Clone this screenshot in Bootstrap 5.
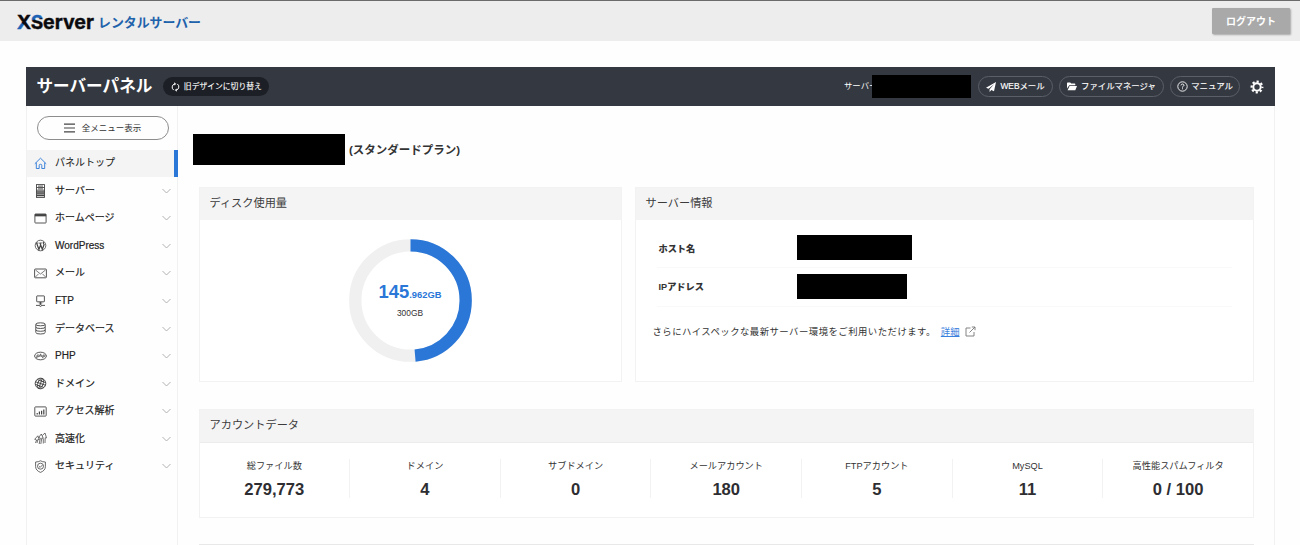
<!DOCTYPE html>
<html lang="ja">
<head>
<meta charset="utf-8">
<title>サーバーパネル</title>
<link href="https://cdn.jsdelivr.net/npm/bootstrap@5.3.0/dist/css/bootstrap.min.css" rel="stylesheet">
<style>
body{font-family:"Liberation Sans","Noto Sans CJK JP",sans-serif;color:#333;background:#fefefe;height:545px;overflow:hidden;line-height:1.5}
svg{display:block;flex:none}
.topbar{height:41px;background:#ededed;border-top:1px solid #6d6a6e;padding:0 10px 0 16px}
.logout{width:78px;height:26px;background:#a9a9a9;color:#fff;font-size:10px;font-weight:700;border:0;border-radius:1px;padding:0;box-shadow:1px 1px 2px rgba(0,0,0,.3)}
.logout:hover{background:#999;color:#fff}
.panelbox{margin:26px 25px 0 26px;height:478px}
.panelhead{height:39px;background:#343840;color:#fff;padding:0 11px 0 10.5px}
.panelhead h1{font-size:16.6px;font-weight:700;line-height:1;padding-top:2px}
.oldbtn{height:18.5px;width:106px;background:#1c1f25;font-size:7.8px;margin-left:11px;-webkit-text-stroke:.1px}
.tool{height:21px;border:1px solid #5b6068;font-size:8.4px;-webkit-text-stroke:.15px}
.srvname{font-size:8.4px;width:28px}
.hid{background:#000;flex:none}
.sidebar{width:152px;border:solid #f1f1f1;border-width:0 1px}
.allmenu{width:132px;height:24px;border:1px solid #8d8d8d;margin:10px 0 9.5px 9.5px;font-size:8.5px;color:#333}
.side-item{height:27.56px;padding:0 6px 0 7px;font-size:10px;color:#222;-webkit-text-stroke:.2px;text-decoration:none}
.side-item span{margin-left:8px;flex:1;margin-top:-1px}
.side-item.on{background:#f4f4f4;box-shadow:inset -4px 0 #2a77d8;width:151px;-webkit-text-stroke:.08px}
.ic{fill:none;stroke:#444;stroke-width:.9}
.chev{fill:none;stroke:#aaa;stroke-width:.9}
.mainarea{padding:28px 20px 0 15px;border-right:1px solid #f1f1f1;min-width:0}
.plan{font-size:11.5px;font-weight:700;margin:2px 0 0 4px}
.box{border:1px solid #f2f2f2;background:#fff}
.box-title{background:#f4f4f4;font-size:11.2px;padding:0 0 1px 10px;color:#3c3c3c}
.inforow{height:38.8px;border-bottom:1px solid #f9f9f9;font-size:9.2px;font-weight:700;padding-left:2px}
.inforow b{width:138.5px;padding-top:3px}
.note{font-size:9.35px;letter-spacing:.5px;margin:18px 0 0 17px}
.note a{color:#3a80dd;letter-spacing:0;margin-left:5px}
.stat{height:39px;font-size:9.2px;border-right:1px solid #f2f2f2;line-height:14px}
.stat:last-child{border:0}
.stat strong{font-size:16.6px;line-height:20px;margin-top:7px;color:#2e2e32}
.donut{width:123px;height:123px}
.donut-label{position:absolute;inset:0;color:#2a77d8;line-height:1}
</style>
</head>
<body>
<header class="topbar d-flex align-items-center justify-content-between">
  <svg width="190" height="26" viewBox="0 0 190 26">
    <defs>
      <linearGradient id="gx" gradientUnits="userSpaceOnUse" x1="1" y1="21" x2="15" y2="7"><stop offset=".36" stop-color="#1d62b5"/><stop offset=".42" stop-color="#0b0b0f"/></linearGradient>
      <linearGradient id="gs" gradientUnits="userSpaceOnUse" x1="18" y1="7" x2="21" y2="20"><stop offset=".3" stop-color="#1d62b5"/><stop offset=".4" stop-color="#0b0b0f"/></linearGradient>
    </defs>
    <g font-family="Inter,'Liberation Sans',sans-serif" font-weight="700" font-size="19" stroke-width=".35">
      <text x=".8" y="20.500" textLength="14.500" lengthAdjust="spacingAndGlyphs" fill="url(#gx)" stroke="url(#gx)">X</text>
      <text x="14.700" y="20.500" textLength="12.500" lengthAdjust="spacingAndGlyphs" fill="url(#gs)" stroke="url(#gs)">S</text>
      <text x="27" y="20.500" textLength="51" lengthAdjust="spacingAndGlyphs" fill="#0b0b0f" stroke="#0b0b0f">erver</text>
    </g>
    <text x="82" y="19" textLength="103" font-family="'Noto Sans CJK JP',sans-serif" font-weight="700" font-size="12.900" fill="#1d62ab">レンタルサーバー</text>
  </svg>
  <button class="btn logout">ログアウト</button>
</header>

<div class="panelbox d-flex flex-column">
  <div class="panelhead d-flex align-items-center flex-shrink-0">
    <h1 class="m-0">サーバーパネル</h1>
    <a class="oldbtn rounded-pill d-flex align-items-center justify-content-center gap-1 text-white text-decoration-none">
      <svg width="9" height="10" viewBox="0 0 9 10" fill="none" stroke="#fff" stroke-width="1"><path d="M2.800 8.100A3.400 3.400 0 0 1 3.400 2M6.200 1.900A3.400 3.400 0 0 1 5.600 8"/><path d="M3.200.2 5.200 1.900 3.200 3.600zM5.800 6.400 3.800 8.100 5.800 9.800z" fill="#fff" stroke="none"/></svg>旧デザインに切り替え</a>
    <div class="d-flex align-items-center ms-auto">
      <span class="text-nowrap srvname">サーバー</span>
      <span class="hid position-relative" style="width:99px;height:23px"></span>
      <a class="tool rounded-pill d-flex align-items-center justify-content-center gap-1 text-white text-decoration-none" style="width:75px;margin-left:7px">
        <svg width="10" height="10" viewBox="0 0 10 10" fill="#fff"><path d="M10 0 0 5.700l2.500 1L8 2.200 3.600 7.200V10l1.700-1.900 2.700 1.100z"/></svg>WEBメール</a>
      <a class="tool rounded-pill d-flex align-items-center justify-content-center gap-1 text-white text-decoration-none" style="width:105px;margin-left:6px">
        <svg width="10" height="9" viewBox="0 0 10 9" fill="#fff"><path d="M0 6.500V1.200Q0 .6.600.6h2.600l1 1h3.500q.6 0 .6.600v1H2.200z"/><path d="M2.600 4H10L8.300 8.200H.6z"/></svg>ファイルマネージャ</a>
      <a class="tool rounded-pill d-flex align-items-center justify-content-center text-white text-decoration-none" style="width:70px;margin-left:6px;gap:3px">
        <svg width="11" height="11" viewBox="0 0 11 11" fill="none" stroke="#fff" stroke-width=".9"><circle cx="5.500" cy="5.500" r="4.700"/><path d="M4 4.400Q4.100 3 5.500 3T7 4.300Q7 5 5.500 5.800V6.600M5.500 7.300v1"/></svg>マニュアル</a>
      <svg style="margin-left:10px" width="14" height="14" viewBox="0 0 14 14" fill="none" stroke="#fff"><circle cx="7" cy="7" r="3.700" stroke-width="2"/><circle cx="7" cy="7" r="5.400" stroke-width="2.100" stroke-dasharray="2.200 2.041" stroke-dashoffset="1.100"/></svg>
    </div>
  </div>

  <div class="d-flex flex-grow-1">
    <nav class="sidebar flex-shrink-0">
      <a class="allmenu rounded-pill d-flex align-items-center justify-content-center text-decoration-none" style="gap:7px">
        <svg width="11" height="10" viewBox="0 0 11 10" stroke="#444" stroke-width="1.200"><path d="M0 1.200h11M0 5h11M0 8.800h11"/></svg>全メニュー表示</a>
      <a class="side-item on d-flex align-items-center"><svg class="ic" style="stroke:#2a77d8" width="13" height="13" viewBox="0 0 13 13"><path d="M.8 6.800 6.500 1.200l5.700 5.600M2.300 5.600v5.900h2.900V8.300q0-1 1.300-1t1.300 1v3.200h2.900V5.600"/></svg><span>パネルトップ</span></a>
      <a class="side-item d-flex align-items-center"><svg class="ic" width="13" height="14" viewBox="0 0 13 14"><rect x="2.500" y=".6" width="8" height="12.800"/><path d="M2.500 3.500h8M2.500 6.200h8M4 2.100h5M4 4.900h5"/><path d="M2.500 8h8M2.500 11.300h8" stroke-width="1.700"/><path d="M3 9.600h7"/></svg><span>サーバー</span><svg class="chev" width="9" height="6" viewBox="0 0 9 6"><path d="m.5 1 4 4 4-4"/></svg></a>
      <a class="side-item d-flex align-items-center"><svg class="ic" width="13" height="11" viewBox="0 0 13 11"><rect x=".9" y="1" width="11.200" height="9" rx=".6"/><path d="M.9 2.200h11.200" stroke-width="2.300"/></svg><span>ホームページ</span><svg class="chev" width="9" height="6" viewBox="0 0 9 6"><path d="m.5 1 4 4 4-4"/></svg></a>
      <a class="side-item d-flex align-items-center"><svg class="ic" width="13" height="13" viewBox="0 0 13 13"><circle cx="6.500" cy="6.500" r="5.300" stroke-width=".8"/><path d="M1.800 4h2.700M5.300 4h2.900" stroke-width=".8"/><path d="m2.600 4 2.300 6.500L6.600 6M6 4l2.300 6.500 1.800-5Q9.100 4.200 9.300 2.800" stroke-width="1.200"/></svg><span>WordPress</span><svg class="chev" width="9" height="6" viewBox="0 0 9 6"><path d="m.5 1 4 4 4-4"/></svg></a>
      <a class="side-item d-flex align-items-center"><svg class="ic" width="13" height="11" viewBox="0 0 13 11"><rect x=".6" y="1" width="11.800" height="8.800" rx=".7"/><path d="m1.500 2 5 4 5-4M1.400 9l3.200-3.200M11.600 9 8.400 5.800" stroke-width=".7"/></svg><span>メール</span><svg class="chev" width="9" height="6" viewBox="0 0 9 6"><path d="m.5 1 4 4 4-4"/></svg></a>
      <a class="side-item d-flex align-items-center"><svg class="ic" width="13" height="12" viewBox="0 0 13 12"><rect x="2.700" y=".9" width="7.700" height="5.900" rx=".4"/><path d="M4.800 8h3.500M6.500 7v2.500M2 10.400h3.200M7.800 10.400H11"/><circle cx="6.500" cy="10.400" r="1"/></svg><span>FTP</span><svg class="chev" width="9" height="6" viewBox="0 0 9 6"><path d="m.5 1 4 4 4-4"/></svg></a>
      <a class="side-item d-flex align-items-center"><svg class="ic" width="13" height="13" viewBox="0 0 13 13"><ellipse cx="6.500" cy="2.300" rx="4.700" ry="1.500"/><path d="M1.800 2.300v8.200q0 1.500 4.700 1.500t4.700-1.500V2.300M1.800 5q0 1.500 4.700 1.500T11.200 5M1.800 7.800q0 1.500 4.700 1.500t4.700-1.500"/></svg><span>データベース</span><svg class="chev" width="9" height="6" viewBox="0 0 9 6"><path d="m.5 1 4 4 4-4"/></svg></a>
      <a class="side-item d-flex align-items-center"><svg class="ic" width="13" height="10" viewBox="0 0 13 10"><ellipse cx="6.500" cy="5" rx="5.900" ry="3.800"/><path d="M2.500 7.200 3.200 4h1.300q1 0 .8.900t-1.300.9H3M5.800 6l.7-3.200M6.300 4h.9q.8 0 .6.800L7.600 6M8.500 7.200 9.200 4h1.100q1 0 .8.900t-1.300.9H9" style="stroke-width:.8"/></svg><span>PHP</span><svg class="chev" width="9" height="6" viewBox="0 0 9 6"><path d="m.5 1 4 4 4-4"/></svg></a>
      <a class="side-item d-flex align-items-center"><svg class="ic" width="13" height="13" viewBox="0 0 13 13"><g transform="rotate(20 6.500 6.500)"><circle cx="6.500" cy="6.500" r="5.300"/><ellipse cx="6.500" cy="6.500" rx="2.600" ry="5.300"/><path d="M6.500 1.200v10.600M1.200 6.500h10.600M2 3.900h9M2 9.100h9"/></g></svg><span>ドメイン</span><svg class="chev" width="9" height="6" viewBox="0 0 9 6"><path d="m.5 1 4 4 4-4"/></svg></a>
      <a class="side-item d-flex align-items-center"><svg class="ic" width="13" height="11" viewBox="0 0 13 11"><rect x=".8" y=".9" width="11.400" height="9.200" rx=".7"/><path d="M3.200 8.500V7M5.400 8.500V5.500M7.600 8.500V4.700M9.800 8.500v-5" stroke-width="1.200"/></svg><span>アクセス解析</span><svg class="chev" width="9" height="6" viewBox="0 0 9 6"><path d="m.5 1 4 4 4-4"/></svg></a>
      <a class="side-item d-flex align-items-center"><svg class="ic" width="13" height="13" viewBox="0 0 13 13" style="stroke-width:.75"><path d="M1.500 11 2.600 8 .7 7.300l3.100-3.500 1.400 4-1.400-.3L3 11M5.200 12 6.300 6 4.700 5.400 7.300 2l2 4.300-1.500-.2L6.800 12M9.300 11.500V6.800M11 11l.2-5.200 1.300.1L11 1 8.300 3.500"/></svg><span>高速化</span><svg class="chev" width="9" height="6" viewBox="0 0 9 6"><path d="m.5 1 4 4 4-4"/></svg></a>
      <a class="side-item d-flex align-items-center"><svg class="ic" width="13" height="13" viewBox="0 0 13 13" style="stroke-width:.8"><path d="M6.500.8Q8.500 2 11.400 2v4.500q0 4-4.900 5.900Q1.600 10.500 1.600 6.500V2Q4.500 2 6.500.8z"/><circle cx="6.500" cy="6.200" r="3"/><path d="m4.900 6.200 1.300 1.200 2.100-2.300"/></svg><span>セキュリティ</span><svg class="chev" width="9" height="6" viewBox="0 0 9 6"><path d="m.5 1 4 4 4-4"/></svg></a>
    </nav>

    <main class="mainarea flex-grow-1">
      <div class="d-flex align-items-center">
        <span class="hid" style="width:152px;height:31px"></span>
        <span class="plan">(スタンダードプラン)</span>
      </div>
      <div class="d-flex" style="margin:22px 0 0 5.5px;gap:13px">
        <section class="box" style="width:423px;height:195px">
          <div class="box-title d-flex align-items-center" style="height:32px">ディスク使用量</div>
          <div class="donut position-relative mx-auto" style="margin-top:18.500px">
            <svg width="123" height="123" viewBox="0 0 123 123" fill="none" stroke-width="12.300"><circle cx="61.500" cy="61.500" r="55.200" stroke="#f0f0f0"/><circle cx="61.500" cy="61.500" r="55.200" stroke="#2a77d8" pathLength="300" stroke-dasharray="145.962 300" transform="rotate(-90 61.500 61.500)"/></svg>
            <div class="donut-label d-flex flex-column align-items-center justify-content-center">
              <div class="fw-bold" style="font-size:18.400px">145<span style="font-size:9.400px">.962GB</span></div>
              <div style="font-size:8.400px;color:#333;margin-top:7px">300GB</div>
            </div>
          </div>
        </section>
        <section class="box flex-grow-1" style="height:195px">
          <div class="box-title d-flex align-items-center" style="height:32px">サーバー情報</div>
          <div style="margin:9px 21px 0 21px">
            <div class="inforow d-flex align-items-center"><b>ホスト名</b><span class="hid" style="width:115px;height:25px"></span></div>
            <div class="inforow d-flex align-items-center"><b>IPアドレス</b><span class="hid" style="width:110px;height:25px"></span></div>
          </div>
          <div class="note d-flex align-items-center">さらにハイスペックな最新サーバー環境をご利用いただけます。<a href="#">詳細</a>
            <svg style="margin-left:5px" width="11" height="11" viewBox="0 0 11 11" fill="none" stroke="#777" stroke-width=".9"><path d="M5.500 2H1v8h8V6M4.500 6.500 10 1M6.800 1H10v3.200"/></svg></div>
        </section>
      </div>
      <section class="box" style="margin:27px 0 0 5.500px;height:109px">
        <div class="box-title d-flex align-items-center" style="height:33px;border-bottom:1px solid #ececec">アカウントデータ</div>
        <div class="row g-0 row-cols-7 flex-nowrap" style="margin-top:16px">
          <div class="col stat d-flex flex-column align-items-center">総ファイル数<strong>279,773</strong></div>
          <div class="col stat d-flex flex-column align-items-center">ドメイン<strong>4</strong></div>
          <div class="col stat d-flex flex-column align-items-center">サブドメイン<strong>0</strong></div>
          <div class="col stat d-flex flex-column align-items-center">メールアカウント<strong>180</strong></div>
          <div class="col stat d-flex flex-column align-items-center">FTPアカウント<strong>5</strong></div>
          <div class="col stat d-flex flex-column align-items-center">MySQL<strong>11</strong></div>
          <div class="col stat d-flex flex-column align-items-center">高性能スパムフィルタ<strong>0 / 100</strong></div>
        </div>
      </section>
      <div style="margin:26px 0 0 5.500px;border-top:1px solid #e8e8e8"></div>
    </main>
  </div>
</div>
<script src="https://cdn.jsdelivr.net/npm/bootstrap@5.3.0/dist/js/bootstrap.bundle.min.js"></script>
</body>
</html>
